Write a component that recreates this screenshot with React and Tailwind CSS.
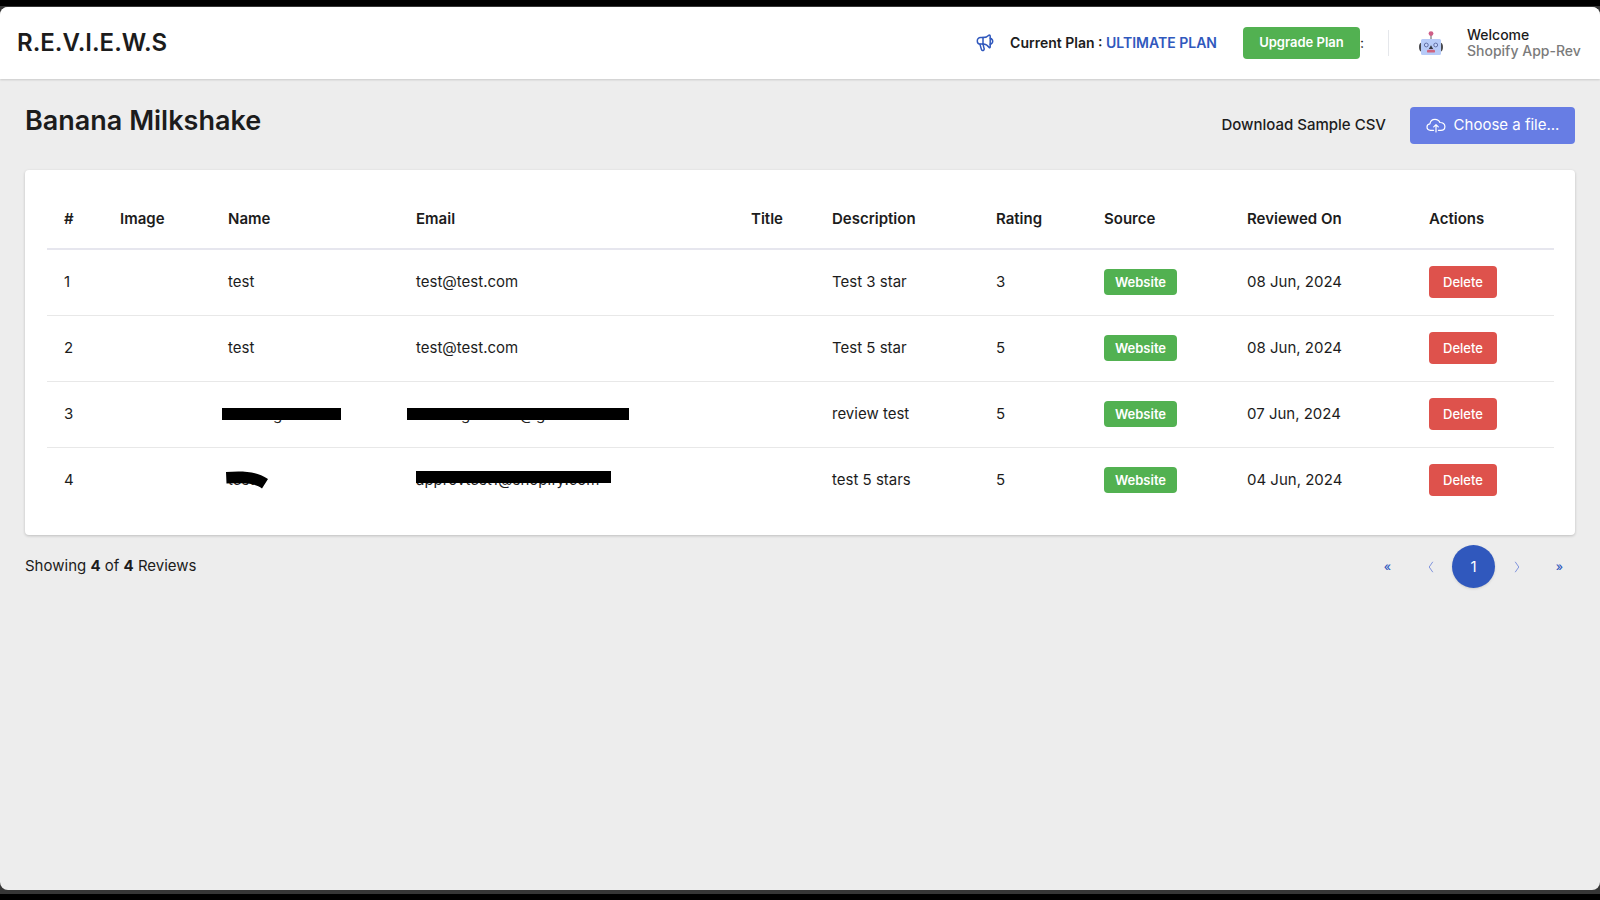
import { useState } from "react";

const initialReviews = [
    { id: 1, name: "test", email: "test@test.com", description: "Test 3 star", rating: 3, date: "08 Jun, 2024" },
    { id: 2, name: "test", email: "test@test.com", description: "Test 5 star", rating: 5, date: "08 Jun, 2024" },
    { id: 3, masked: "full", description: "review test", rating: 5, date: "07 Jun, 2024" },
    { id: 4, masked: "partial", name: "test", email: "approvtest1@shopify.com", description: "test 5 stars", rating: 5, date: "04 Jun, 2024" },
];

const columns = [
    { label: "#", width: "w-[56px]" },
    { label: "Image", width: "w-[108px]" },
    { label: "Name", width: "w-[188px]" },
    { label: "Email", width: "w-[335px]" },
    { label: "Title", width: "w-[81px]" },
    { label: "Description", width: "w-[164px]" },
    { label: "Rating", width: "w-[108px]" },
    { label: "Source", width: "w-[143px]" },
    { label: "Reviewed On", width: "w-[182px]" },
    { label: "Actions", width: "w-[142px]" },
];

const MegaphoneIcon = () => (
    <svg viewBox="0 0 18 18" className="w-[18px] h-[18px]" fill="none" stroke="#3058bd" strokeWidth="1.5" strokeLinejoin="round" strokeLinecap="round">
        <path d="M7 3.6H4.6C2.6 3.6 1.3 5 1.3 6.9c0 1.9 1.3 3.2 3.3 3.2H7" />
        <path d="M7 3.6v6.5" />
        <path d="M7 3.6c2.6 0 4.6-.9 6.2-2.6.6 0 1 .3 1 .9v11c0 .6-.5.9-1 .6C11.600 11.300 9.600 10.200 7 10.100" />
        <path d="M14.2 4.300c1.600.5 2.500 1.600 2.500 3s-.9 2.500-2.500 3" />
        <path d="M3.900 10.100l1.500 5.300c.3 1 1.100 1.400 1.900 1.100.8-.3 1.100-1 .8-1.900L7 10.100" />
    </svg>
);

const RobotIcon = () => (
    <svg viewBox="0 0 24 25" className="w-6 h-[25px]">
        <path d="M12 3v6" stroke="#5b5560" strokeWidth="1" />
        <circle cx="12" cy="2.600" r="2.400" fill="#cf5f88" />
        <path d="M2.600 11.500C.8 11.700 0 13.500 0 16s.8 4.500 2.600 4.700zM21.400 11.500c1.800.2 2.600 2 2.600 4.500s-.8 4.500-2.600 4.700z" fill="#4a4a4e" />
        <rect x="2" y="8" width="20" height="16" rx="1.500" fill="#b7cbf8" />
        <circle cx="7.300" cy="14" r="1.900" fill="#c7d6fb" stroke="#5f6da3" strokeWidth="1" />
        <circle cx="16.700" cy="14" r="1.900" fill="#c7d6fb" stroke="#5f6da3" strokeWidth="1" />
        <path d="M12 14.200l2.200 3.800H9.800z" fill="#37363c" />
        <rect x="8" y="18.800" width="8" height="2.800" rx="1.200" fill="#d0647f" />
    </svg>
);

const CloudUploadIcon = () => (
    <svg viewBox="0 0 20 15" className="w-5 h-[15px]" fill="none" stroke="currentColor" strokeWidth="1.200" strokeLinecap="round" strokeLinejoin="round">
        <path d="M7.600 12.300H4.500C2.400 12.300 1 10.900 1 9.100s1.200-3 2.900-3.200C4.300 3.100 6.300 1.300 9 1.300c2.300 0 4.100 1.200 4.900 3.200 2.900-.1 5 1.500 5 3.900 0 2.300-1.700 3.900-4.100 3.900h-2.400" />
        <path d="M10 14V6.800M7.700 8.900L10 6.600l2.300 2.300" />
    </svg>
);

// Covers a value with a black marker, leaving the cell's own text below it
const NameMask = ({ masked }) =>
    masked === "full" ? (
        <svg className="absolute -left-1.5 top-0 w-[120px] h-6" viewBox="0 0 120 24" aria-hidden="true">
            <text x="51" y="18" fontSize="15" fill="#212121">g</text>
            <rect x="0" y="6" width="119" height="12" />
        </svg>
    ) : (
        <svg className="absolute -left-1.5 top-0 w-[60px] h-6" viewBox="0 0 60 24" aria-hidden="true">
            <path d="M4 4C18 3 33 2.500 46 11L40 20.500C32 14 18 15.500 4.500 15.500z" />
        </svg>
    );

const EmailMask = ({ masked }) =>
    masked === "full" ? (
        <svg className="absolute -left-[9px] top-0 w-[222px] h-6" viewBox="0 0 222 24" aria-hidden="true">
            <text x="54" y="18" fontSize="15" fill="#212121">g</text>
            <text x="113" y="18" fontSize="14" fill="#212121">@</text>
            <text x="129" y="18" fontSize="15" fill="#212121">g</text>
            <rect x="0" y="6" width="222" height="12" />
        </svg>
    ) : (
        <svg className="absolute left-0 top-0 w-[195px] h-6" viewBox="0 0 195 24" aria-hidden="true">
            <rect x="0" y="3" width="195" height="12" />
        </svg>
    );

const Header = () => (
    <header className="relative bg-white h-[72px] pl-[17px] pr-4 flex items-center justify-between shadow-[0_1px_2px_rgba(0,0,0,0.15)]">
        <span className="text-2xl font-semibold">R.E.V.I.E.W.S</span>
        <div className="flex items-center">
            <MegaphoneIcon />
            <p className="ml-4 text-sm font-semibold">
                Current Plan : <a href="#plan" className="text-[#3058bd]">ULTIMATE PLAN</a>
            </p>
            <button className="ml-[26px] w-[117px] h-8 rounded bg-[#52b151] text-white text-[13px] font-semibold">
                Upgrade Plan
            </button>
            <span className="text-sm">:</span>
            <div className="ml-6 w-px h-[26px] bg-gray-200" />
            <div className="ml-[30px]">
                <RobotIcon />
            </div>
            <div className="ml-6 w-[117px] text-sm leading-4 font-medium whitespace-nowrap">
                <div>Welcome</div>
                <div className="text-[#7b7b7b]">Shopify App-Rev</div>
            </div>
        </div>
    </header>
);

const App = () => {
    const [reviews, setReviews] = useState(initialReviews);

    const handleDelete = (id) => {
        setReviews(prev => prev.filter(r => r.id !== id));
    };

    return (
        <div className="min-h-screen flex flex-col bg-black py-1.5 font-['Inter',sans-serif] text-[#1c1c1c]">
            <div className="flex-1 flex flex-col bg-[#363636] pt-px pb-1">
                <div className="flex-1 bg-[#ededed] rounded-lg overflow-hidden">
                    <Header />

                    <main className="px-[25px] pt-7">
                        <div className="flex items-start justify-between">
                            <h1 className="text-[27px] leading-7 font-semibold">Banana Milkshake</h1>
                            <div className="flex items-center gap-6 text-[15px]">
                                <a href="#sample" className="font-medium">Download Sample CSV</a>
                                <label className="w-[165px] h-[37px] rounded bg-[#677de4] text-white flex items-center justify-center gap-2 cursor-pointer">
                                    <input type="file" className="sr-only" />
                                    <CloudUploadIcon />
                                    <span>Choose a file...</span>
                                </label>
                            </div>
                        </div>

                        {/* Reviews table */}
                        <div className="mt-[26px] bg-white rounded px-[22px] pt-[21px] pb-[22px] shadow-[0_1px_3px_rgba(0,0,0,0.2)]">
                            <table className="w-full table-fixed text-left text-[15px] leading-6">
                                <thead>
                                    <tr className="h-[58px] border-b-2 border-[#e6e6ee]">
                                        {columns.map(col => (
                                            <th key={col.label} className={`${col.width} pl-[17px] pb-0.5 font-semibold`}>{col.label}</th>
                                        ))}
                                    </tr>
                                </thead>
                                <tbody>
                                    {reviews.map(review => (
                                        <tr key={review.id} className="h-[66px] border-b border-[#e8e8e8] last:border-b-0">
                                            <td className="pl-[17px]">{review.id}</td>
                                            <td></td>
                                            <td className="pl-[17px]">
                                                <div className="relative h-6">
                                                    {review.name}
                                                    {review.masked && <NameMask masked={review.masked} />}
                                                </div>
                                            </td>
                                            <td className="pl-[17px]">
                                                <div className="relative h-6">
                                                    {review.email}
                                                    {review.masked && <EmailMask masked={review.masked} />}
                                                </div>
                                            </td>
                                            <td></td>
                                            <td className="pl-[17px]">{review.description}</td>
                                            <td className="pl-[17px]">{review.rating}</td>
                                            <td className="pl-[17px]">
                                                <span className="flex items-center justify-center w-[73px] h-[26px] rounded bg-[#52b151] text-white text-[13px] font-semibold">
                                                    Website
                                                </span>
                                            </td>
                                            <td className="pl-[17px]">{review.date}</td>
                                            <td className="pl-[17px]">
                                                <button
                                                    onClick={() => handleDelete(review.id)}
                                                    className="block w-[68px] h-8 rounded bg-[#de524c] text-white text-[13px] font-medium"
                                                >
                                                    Delete
                                                </button>
                                            </td>
                                        </tr>
                                    ))}
                                </tbody>
                            </table>
                        </div>

                        {/* Pagination */}
                        <div className="mt-2.5 flex items-center justify-between">
                            <p className="text-[15px]">
                                Showing <b>{reviews.length}</b> of <b>{reviews.length}</b> Reviews
                            </p>
                            <nav className="-mr-1.5 flex text-xs text-[#3058bd]">
                                <button aria-label="First" className="w-[43px] h-[43px] font-medium">«</button>
                                <button aria-label="Previous" className="w-[43px] h-[43px] flex items-center justify-center">
                                    <svg viewBox="0 0 6 12" className="w-1.5 h-3" fill="none" stroke="#8094dc"><path d="M4.800.800L1.200 6l3.600 5.200" /></svg>
                                </button>
                                <button className="w-[43px] h-[43px] rounded-full bg-[#3058bd] text-white text-[15px] shadow-sm">1</button>
                                <button aria-label="Next" className="w-[43px] h-[43px] flex items-center justify-center">
                                    <svg viewBox="0 0 6 12" className="w-1.5 h-3" fill="none" stroke="#8094dc"><path d="M1.200.800L4.800 6l-3.600 5.200" /></svg>
                                </button>
                                <button aria-label="Last" className="w-[43px] h-[43px] font-medium">»</button>
                            </nav>
                        </div>
                    </main>
                </div>
            </div>
        </div>
    );
};

export default App;
